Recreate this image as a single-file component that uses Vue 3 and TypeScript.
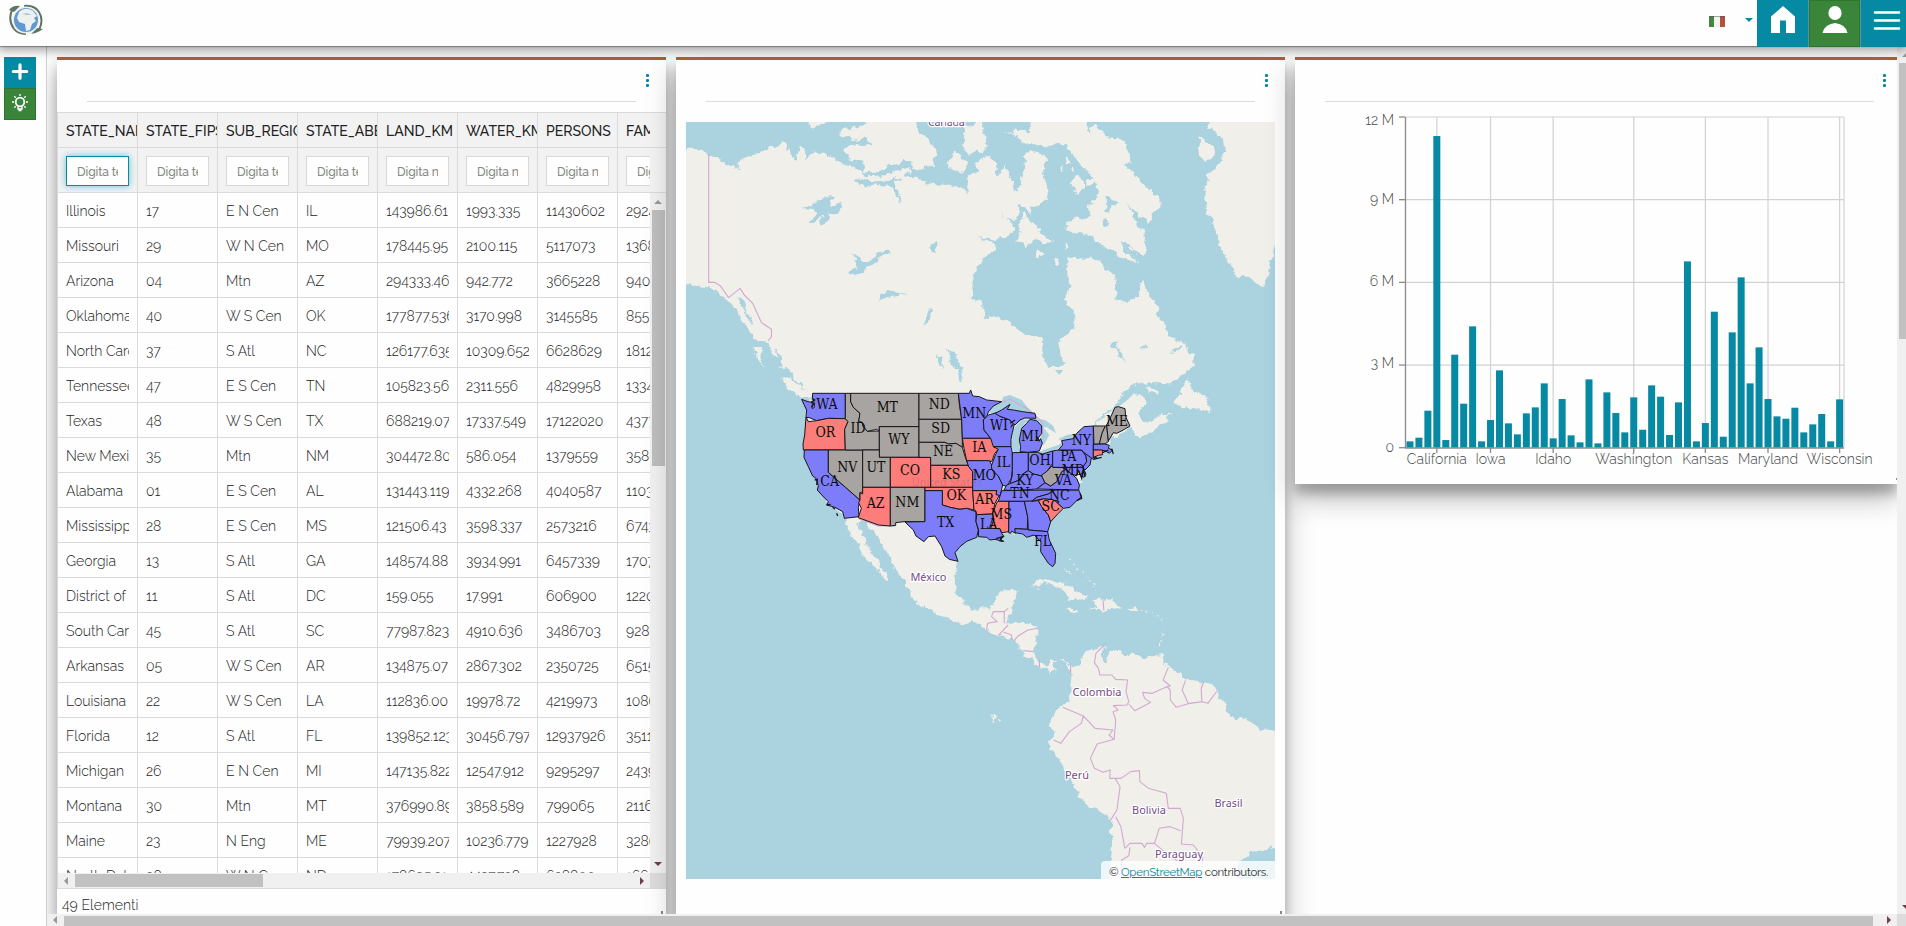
<script setup lang="ts">
type Row = [string, string, string, string, string, string, string, string]

const headers: string[] = ['STATE_NAME', 'STATE_FIPS', 'SUB_REGION', 'STATE_ABBR', 'LAND_KM', 'WATER_KM', 'PERSONS', 'FAMILIES']
const hint = (i: number): string => (i < 4 ? 'Digita testo' : 'Digita numero')

const rows: Row[] = [
  ['Illinois', '17', 'E N Cen', 'IL', '143986.61', '1993.335', '11430602', '2924880'],
  ['Missouri', '29', 'W N Cen', 'MO', '178445.95', '2100.115', '5117073', '1368334'],
  ['Arizona', '04', 'Mtn', 'AZ', '294333.46', '942.772', '3665228', '940106'],
  ['Oklahoma', '40', 'W S Cen', 'OK', '177877.536', '3170.998', '3145585', '855321'],
  ['North Carolina', '37', 'S Atl', 'NC', '126177.635', '10309.652', '6628629', '1812053'],
  ['Tennessee', '47', 'E S Cen', 'TN', '105823.56', '2311.556', '4829958', '1334400'],
  ['Texas', '48', 'W S Cen', 'TX', '688219.07', '17337.549', '17122020', '4377000'],
  ['New Mexico', '35', 'Mtn', 'NM', '304472.80', '586.054', '1379559', '358000'],
  ['Alabama', '01', 'E S Cen', 'AL', '131443.119', '4332.268', '4040587', '1103835'],
  ['Mississippi', '28', 'E S Cen', 'MS', '121506.43', '3598.337', '2573216', '674378'],
  ['Georgia', '13', 'S Atl', 'GA', '148574.88', '3934.991', '6457339', '1707700'],
  ['District of Columbia', '11', 'S Atl', 'DC', '159.055', '17.991', '606900', '122087'],
  ['South Carolina', '45', 'S Atl', 'SC', '77987.823', '4910.636', '3486703', '928206'],
  ['Arkansas', '05', 'W S Cen', 'AR', '134875.07', '2867.302', '2350725', '651555'],
  ['Louisiana', '22', 'W S Cen', 'LA', '112836.00', '19978.72', '4219973', '1086000'],
  ['Florida', '12', 'S Atl', 'FL', '139852.123', '30456.797', '12937926', '3511825'],
  ['Michigan', '26', 'E N Cen', 'MI', '147135.822', '12547.912', '9295297', '2439171'],
  ['Montana', '30', 'Mtn', 'MT', '376990.89', '3858.589', '799065', '211666'],
  ['Maine', '23', 'N Eng', 'ME', '79939.207', '10236.779', '1227928', '328685'],
  ['North Dakota', '38', 'W N Cen', 'ND', '178695.31', '4427.738', '638800', '166270'],
]

/* Chart: persons per state, in thousands */
const persons: number[] = [
  230, 363, 1343, 11309, 278, 3375, 1597, 4403, 230, 1004, 2806, 883, 484, 1246, 1463, 2334, 339, 1766, 448, 194,
  2479, 157, 2008, 1258, 556, 1826, 653, 2262, 1851, 460, 1645, 6761, 230, 895, 4935, 399, 4185, 6181, 2334, 3641,
  1766, 1137, 1052, 1451, 556, 847, 1222, 230, 1754,
]
const plotX = 110.5
const plotTop = 17
const plotBottom = 347.7
const step = 438.6 / 49
const barX = (i: number): number => plotX + step * (i + 0.5) - 3.5
const barH = (v: number): number => (v / 12000) * (plotBottom - plotTop)
const ticksX: { i: number; label: string; w: number }[] = [
  { i: 3, label: 'California', w: 60 },
  { i: 9, label: 'Iowa', w: 30 },
  { i: 16, label: 'Idaho', w: 36 },
  { i: 25, label: 'Washington', w: 77 },
  { i: 33, label: 'Kansas', w: 46 },
  { i: 40, label: 'Maryland', w: 60 },
  { i: 48, label: 'Wisconsin', w: 66 },
]
const ticksY: { v: number; label: string; dy: number }[] = [
  { v: 12, label: '12 M', dy: 8 },
  { v: 9, label: '9 M', dy: 4 },
  { v: 6, label: '6 M', dy: 4 },
  { v: 3, label: '3 M', dy: 3 },
  { v: 0, label: '0', dy: 4 },
]
const yOf = (v: number): number => plotBottom - barH(v * 1000)

/* Map: state outlines grouped by class */
type Tone = 'blue' | 'red' | 'gray'
const states: [Tone, string][] = [
  ['blue', '98,70 196,70 196,146 145,145 110,152 88,143 78,142 80,120 72,104 65,88 84,95 96,97 99,112 94,108 97,116 103,112 102,96 97,84'],
  ['red', '78,142 85,155 110,152 145,145 196,146 204,155 194,178 196,240 70,240 69,222 74,195'],
  ['blue', '73,240 145,240 145,307 240,390 235,412 237,440 193,445 188,425 165,412 140,405 145,395 128,378 112,360 115,348 108,325 98,318 85,290 72,262'],
  ['gray', '145,240 248,240 248,365 240,368 240,390 145,307'],
  ['gray', '196,70 212,70 212,95 220,112 240,130 236,155 246,156 250,170 262,184 298,183 298,240 196,240 194,178 204,155 196,146'],
  ['gray', '212,70 417,70 417,170 298,170 298,183 290,178 262,184 250,170 246,156 236,155 240,130 220,112 212,95'],
  ['gray', '298,170 417,170 417,262 298,262'],
  ['gray', '248,240 298,240 298,262 331,262 331,352 248,352'],
  ['red', '331,262 452,262 452,352 331,352'],
  ['red', '248,352 331,352 331,468 295,465 235,443 244,415 236,398 240,390 240,368 248,372'],
  ['gray', '331,352 435,352 435,455 372,455 347,458 347,466 331,468'],
  ['gray', '417,70 535,70 539,110 545,148 417,148'],
  ['gray', '417,148 545,148 547,205 547,232 528,220 505,222 495,217 417,217'],
  ['gray', '417,217 495,217 505,222 528,220 547,232 556,262 565,286 452,286 452,262 417,262'],
  ['red', '452,286 565,286 578,305 578,352 452,352'],
  ['red', '435,352 578,352 582,420 560,415 540,418 510,412 487,405 487,362 435,362'],
  ['blue', '435,362 487,362 487,405 510,412 540,418 560,415 588,425 588,455 595,480 590,502 560,514 540,530 525,548 534,574 508,568 495,558 485,530 465,498 445,500 432,515 408,498 400,480 375,456 435,455'],
  ['blue', '535,70 568,70 572,60 578,78 598,80 620,90 665,95 640,108 625,125 622,135 610,150 612,180 632,205 547,205 545,148'],
  ['red', '547,205 638,205 642,222 655,238 644,250 636,274 560,272 552,235'],
  ['blue', '560,272 628,272 638,290 636,300 655,318 668,345 664,362 660,378 648,378 650,362 578,362 578,305 566,290'],
  ['red', '578,362 650,362 648,374 658,376 645,400 638,432 590,434 588,423 582,420'],
  ['blue', '590,434 638,432 642,450 632,475 660,476 665,490 672,500 660,504 668,514 645,508 630,510 620,502 595,500 596,480 588,455'],
  ['blue', '625,135 650,128 658,138 690,150 698,160 693,172 705,155 697,188 693,208 693,230 640,230 632,205 612,180 610,150'],
  ['blue', '640,230 693,230 697,248 697,300 694,325 680,350 668,345 655,318 636,300 634,288 646,255 655,238'],
  ['blue', '697,248 745,247 745,302 728,312 718,330 690,342 697,315'],
  ['blue', '720,245 722,230 718,210 725,175 740,160 750,148 770,152 785,168 785,190 772,208 777,214 782,206 787,220 778,243 745,247'],
  ['blue', '645,130 665,120 690,103 682,118 700,120 728,125 765,130 768,145 735,144 720,150 705,165 698,160 690,150 658,138'],
  ['blue', '745,247 772,247 788,252 818,243 818,280 800,305 785,318 760,312 745,302'],
  ['blue', '672,360 680,345 718,330 728,312 745,302 760,312 785,318 795,338 770,357 705,362'],
  ['blue', '665,362 825,360 805,372 770,382 755,394 655,394'],
  ['red', '652,394 687,394 686,485 665,488 660,476 632,475 642,450 638,430'],
  ['blue', '687,394 733,394 743,440 742,478 705,476 708,490 695,484 692,490 686,488'],
  ['blue', '733,394 775,392 785,410 805,435 812,455 803,485 745,480 743,440'],
  ['blue', '705,476 742,478 745,480 803,485 808,510 827,550 825,580 818,590 805,580 782,545 783,515 762,495 740,502 728,492 705,488'],
  ['red', '775,392 790,386 815,388 825,392 850,415 835,430 812,455 805,435 785,410'],
  ['blue', '755,394 770,382 805,372 825,360 896,360 905,380 890,392 870,412 850,415 825,392 815,388 790,386'],
  ['blue', '770,357 795,338 812,348 830,335 845,305 858,298 875,312 890,325 898,345 896,360'],
  ['gray', '787,322 785,315 802,303 818,285 820,292 848,293 858,298 845,305 830,335 812,348 795,338'],
  ['blue', '818,243 835,240 905,240 918,258 920,275 910,292 818,292'],
  ['blue', '848,293 908,292 918,312 912,322 900,315 895,300 890,318 875,312 858,298'],
  ['blue', '905,240 912,248 935,258 930,285 915,300 908,292 920,275 918,258'],
  ['blue', '835,240 848,225 845,212 880,206 890,190 912,170 940,168 940,262 950,262 940,268 912,248 905,240'],
  ['gray', '940,168 976,168 966,190 958,222 942,223'],
  ['gray', '976,168 980,165 985,215 975,222 958,222 966,190'],
  ['gray', '980,165 995,135 1005,112 1015,110 1035,116 1037,140 1050,168 1030,180 1010,190 1000,188 985,213'],
  ['blue', '940,223 975,222 988,226 985,235 998,240 988,250 975,242 940,240'],
  ['red', '940,240 968,240 968,254 955,256 940,262'],
]
const labels: [string, number, number][] = [
  ['WA', 141, 103], ['OR', 136, 187], ['ID', 234, 174], ['MT', 322, 110], ['ND', 478, 101], ['SD', 482, 174],
  ['MN', 583, 128], ['WI', 657, 166], ['WY', 357, 208], ['NE', 489, 243], ['IA', 598, 231], ['MI', 750, 197],
  ['NY', 904, 209], ['ME', 1011, 152], ['NV', 202, 292], ['UT', 288, 292], ['CO', 390, 300], ['KS', 514, 312],
  ['MO', 613, 314], ['IL', 670, 275], ['OH', 780, 271], ['PA', 865, 258], ['MD', 880, 299], ['KY', 735, 331],
  ['VA', 850, 331], ['TN', 720, 368], ['NC', 838, 375], ['SC', 812, 409], ['AR', 614, 386], ['OK', 529, 374],
  ['CA', 149, 334], ['AZ', 287, 399], ['NM', 382, 397], ['TX', 497, 456], ['LA', 626, 463], ['MS', 664, 432],
  ['FL', 788, 513],
]
const countries: [string, number, number, number][] = [
  ['México', 242.5, 458.5, 36],
  ['Colombia', 411, 573.5, 49],
  ['Perú', 391, 657, 24],
  ['Bolivia', 463, 692, 34],
  ['Brasil', 542.5, 685, 28],
  ['Paraguay', 493, 736, 48],
]
</script>

<template>
  <div class="page">
    <header class="topbar">
      <svg class="logo" viewBox="0 0 36 32" width="36" height="32">
        <path d="M5 4 Q-1 15 6 25 Q10 30 18 30" fill="none" stroke="#5f7563" stroke-width="2" />
        <path d="M16 2 Q27 1 31 8 Q36 16 31 26" fill="none" stroke="#5f7563" stroke-width="2" />
        <path d="M1 6 Q5 1 12 2 L6 8Z M35 25 Q30 29 23 30 L29 24Z" fill="#5f7563" />
        <circle cx="18" cy="16" r="13.5" fill="#eceeee" />
        <circle cx="18" cy="16" r="12" fill="#5f98d3" />
        <path d="M11 8 Q17 2 25 7 L29 12 L26 14 L28 17 L24 20 L22 26 L18 27 L17 20 L11 18 L9 14Z" fill="#eef0ee" />
        <path d="M14 10 L19 9 L24 11 L19 11Z" fill="#a8c5df" />
      </svg>
      <div class="topright">
        <svg class="flag" width="16" height="11" viewBox="0 0 16 11">
          <path d="M0 0h5v11h-5z" fill="#3f8a3c" /><path d="M5 0h6v11h-6z" fill="#f2f2f0" /><path d="M11 0h5v11h-5z" fill="#b8503c" />
          <path d="M1.500 10V1.500H5M11 1.500H14.500V6" fill="none" stroke="#666" opacity=".6" /><path d="M0 .5H16" stroke="#555" opacity=".5" />
        </svg>
        <span class="caret"></span>
        <button class="sq teal">
          <svg width="52" height="47" viewBox="0 0 52 47"><path d="M26 6 L38 16.500 V33 H29 V20.500 H23 V33 H14 V16.500Z" fill="#fff" /></svg>
        </button>
        <button class="sq green">
          <svg width="52" height="47" viewBox="0 0 52 47"><ellipse cx="26" cy="13" rx="6.600" ry="7" fill="#fff" /><path d="M13.500 33 Q15 24.500 26 23 Q37 24.500 38.500 33Z" fill="#fff" /></svg>
        </button>
        <button class="sq teal last">
          <svg width="45" height="47" viewBox="0 0 45 47"><path d="M14 12.500H38M14 20.500H38M14 28.500H38" stroke="#fff" stroke-width="2.600" stroke-linecap="round" /></svg>
        </button>
      </div>
    </header>

    <div class="main">
      <aside class="side">
        <button class="tool teal">
          <svg width="32" height="31" viewBox="0 0 32 31"><path d="M9.300 14.500H22.700M16 7.800V21.200" stroke="#fff" stroke-width="3.200" stroke-linecap="round" /></svg>
        </button>
        <button class="tool green">
          <svg width="32" height="32" viewBox="0 0 32 32" fill="none" stroke="#fff">
            <circle cx="16" cy="14" r="4.300" stroke-width="1.800" />
            <path d="M14 18.500V21H18V18.500M14.500 22.500H17.500" stroke-width="1.400" />
            <path d="M16 6V8M10.300 8.300L11.700 9.700M21.700 8.300L20.300 9.700M8 14H10M22 14H24M10.300 19.700L11.700 18.300M21.700 19.700L20.300 18.300" stroke-width="1.300" />
          </svg>
        </button>
      </aside>

      <div class="workspace">
        <div class="cards">
          <section class="card tall">
            <div class="head"><i class="dots"></i></div>
            <div class="grid">
              <div class="line heads">
                <div v-for="h in headers" :key="h" class="hcell">{{ h }}</div>
              </div>
              <div class="line filters">
                <div v-for="(h, i) in headers" :key="h" class="fcell">
                  <div class="field" :class="{ focus: i === 0 }"><span>{{ hint(i) }}</span></div>
                </div>
              </div>
              <div class="bodywrap">
                <div class="body">
                  <div v-for="r in rows" :key="r[0]" class="line row">
                    <div v-for="(c, i) in r" :key="i" class="cell" :class="{ num: i > 3 || i === 1 }"><span>{{ c }}</span></div>
                  </div>
                </div>
                <div class="vbar"><i class="up"></i><b></b><i class="down"></i></div>
              </div>
              <div class="hbar"><i class="left"></i><b></b><i class="right"></i></div>
            </div>
            <div class="foot">49 Elementi</div>
            <span class="grip"></span>
          </section>

          <section class="card tall">
            <div class="head"><i class="dots"></i></div>
            <div class="map">
              <svg width="589" height="757" viewBox="0 0 589 757">
                <defs>
                  <filter id="coast" x="-10" y="-10" width="609" height="777" filterUnits="userSpaceOnUse">
                    <feTurbulence type="fractalNoise" baseFrequency=".16" numOctaves="3" seed="4" />
                    <feDisplacementMap in="SourceGraphic" scale="7" xChannelSelector="R" yChannelSelector="G" />
                  </filter>
                </defs>
                <rect width="589" height="757" fill="#aad2df" />
                <g filter="url(#coast)">
                  <rect x="-10" y="-10" width="609" height="777" fill="#aad2df" />
                  <g transform="matrix(.38265 0 0 .33333 -6 -12)" class="land">
                    <path d="M-20,120 L16,120 L40,113 L58,120 L75,134 L95,138 L110,150 L125,165 L145,172 L160,181 L150,160 L165,145 L185,135 L195,128 L215,125 L240,105 L252,112 L262,100 L268,88 L280,105 L285,125 L300,148 L306,148 L312,110 L325,115 L330,148 L345,128 L380,128 L395,142 L410,150 L420,162 L450,170 L475,182 L485,200 L520,202 L560,185 L600,172 L605,185 L585,195 L590,205 L560,205 L530,215 L500,212 L460,205 L455,217 L485,228 L520,222 L545,228 L560,235 L565,260 L577,285 L570,240 L560,215 L590,202 L620,200 L640,220 L700,225 L725,230 L742,240 L755,246 L750,205 L760,190 L780,185 L775,155 L800,140 L825,155 L830,200 L850,165 L858,198 L870,210 L878,248 L890,220 L898,190 L903,125 L920,122 L940,130 L960,150 L945,190 L953,215 L963,240 L960,258 L945,275 L935,290 L915,290 L920,320 L905,295 L888,280 L890,300 L875,330 L850,325 L835,305 L845,320 L870,340 L870,360 L855,380 L840,382 L825,392 L780,380 L820,402 L825,420 L800,435 L780,465 L770,490 L764,520 L764,568 L787,570 L797,624 L825,617 L860,635 L878,655 L905,675 L948,683 L950,735 L955,760 L965,775 L985,793 L1000,785 L1003,760 L995,735 L988,695 L1020,670 L1030,655 L1032,610 L1025,595 L1003,570 L1018,530 L1012,480 L1012,440 L1035,440 L1050,450 L1075,440 L1095,455 L1110,480 L1135,490 L1140,520 L1138,565 L1168,582 L1180,568 L1197,560 L1200,530 L1210,508 L1225,555 L1250,590 L1248,610 L1262,640 L1285,685 L1320,700 L1325,720 L1342,735 L1342,770 L1320,790 L1280,820 L1190,820 L1160,850 L1130,900 L340,900 L345,850 L315,820 L295,790 L275,775 L265,745 L240,730 L235,700 L205,695 L185,665 L165,640 L155,600 L135,580 L120,570 L95,540 L75,532 L16,522 L-20,522Z" />
                    <path d="M413,70 L440,55 L480,45 L485,20 L620,20 L622,65 L650,90 L665,110 L672,130 L660,150 L665,172 L640,165 L635,180 L610,178 L600,150 L585,150 L575,165 L545,165 L530,180 L500,190 L480,185 L480,155 L440,145 L428,118 L445,105 L505,102 L490,88 L455,92Z M332,20 L345,62 L358,45 L378,40 L380,20Z M742,50 L770,48 L780,20 L790,50 L803,100 L795,130 L770,125 L755,135 L738,110Z M708,135 L720,122 L735,145 L752,155 L742,190 L720,180 L700,178Z M842,65 L870,70 L872,55 L915,68 L912,20 L1060,20 L1070,65 L1080,40 L1095,60 L1120,80 L1150,85 L1165,110 L1180,155 L1160,165 L1190,200 L1220,230 L1258,270 L1250,300 L1235,310 L1225,345 L1210,325 L1190,308 L1175,290 L1190,330 L1215,370 L1210,395 L1218,415 L1215,440 L1200,435 L1165,400 L1155,398 L1200,460 L1165,448 L1120,415 L1095,405 L1085,385 L1050,368 L1010,365 L1012,335 L1030,325 L1050,330 L1075,320 L1065,295 L1095,250 L1090,225 L1070,190 L1040,155 L1010,105 L990,98 L960,110 L935,100 L895,100 L880,75Z M900,305 L915,335 L940,355 L940,370 L978,395 L950,400 L930,385 L905,415 L900,395 L875,398 L892,370 L888,335Z M927,440 L935,420 L955,432 L937,448Z M978,445 L990,445 L985,472Z M1005,400 L1018,405 L1008,418Z M1345,20 L1385,40 L1380,50 L1420,90 L1422,130 L1410,160 L1395,180 L1375,195 L1385,210 L1370,240 L1378,310 L1395,330 L1400,370 L1410,385 L1405,405 L1430,450 L1455,500 L1490,500 L1510,522 L1525,530 L1535,500 L1545,450 L1555,410 L1580,400 L1580,20Z M1360,80 L1385,105 L1400,120 L1395,145 L1370,153 L1355,130Z M265,802 L290,805 L320,835 L347,862 L320,865 L285,840Z M192,710 L212,715 L210,745 L222,772 L200,745Z M145,590 L160,590 L180,640 L165,645Z M180,655 L205,660 L195,690Z" />
                    <ellipse cx="1040" cy="223" rx="16" ry="25" />
                    <ellipse cx="1072" cy="215" rx="12" ry="9" /><ellipse cx="1012" cy="150" rx="5" ry="10" /><ellipse cx="1000" cy="175" rx="4" ry="8" /><ellipse cx="1027" cy="180" rx="4" ry="7" />
                  </g>
                  <g transform="matrix(.33333 0 0 .33333 94 248)" class="land">
                    <path d="M-10,-10 L30,0 L50,30 L75,60 L100,88 L80,96 L82,240 L108,320 L148,396 L193,442 L205,480 L235,520 L240,540 L260,570 L295,600 L320,632 L325,620 L300,588 L290,560 L268,545 L255,500 L240,480 L235,455 L260,450 L270,475 L295,500 L310,535 L330,560 L350,600 L385,650 L400,680 L500,680 L525,640 L523,600 L530,570 L520,550 L540,520 L590,490 L700,490 L755,490 L780,510 L815,575 L820,550 L800,490 L806,460 L846,415 L893,393 L893,350 L918,290 L933,265 L985,243 L985,215 L1045,175 L1050,170 L1065,200 L1080,205 L1130,175 L1170,150 L1160,140 L1175,130 L1140,135 L1105,158 L1085,150 L1075,125 L1095,100 L1095,80 L1060,70 L1035,88 L1010,110 L985,128 L940,165 L935,163 L980,125 L1010,90 L1030,60 L1055,40 L1140,36 L1140,-10Z" />
                    <path d="M1225,20 L1235,45 L1240,62 L1275,75 L1292,115 L1286,130 L1262,115 L1240,118 L1180,102 L1200,70Z M1092,48 L1110,50 L1140,65 L1135,72 L1110,66Z" />
                  </g>
                  <g transform="matrix(.39541 0 0 .33333 -6 438)" class="land">
                    <path d="M528,0 L545,18 L560,30 L583,70 L583,110 L600,130 L640,155 L680,180 L712,193 L745,183 L765,200 L785,220 L805,228 L840,238 L855,258 L870,275 L868,290 L885,292 L905,322 L930,325 L940,340 L948,325 L940,312 L960,300 L975,310 L990,340 L990,400 L985,420 L965,440 L950,455 L940,480 L938,505 L950,515 L932,540 L938,570 L950,580 L962,605 L985,655 L1005,690 L1005,710 L1035,740 L1060,750 L1090,782 L1090,820 L1093,850 L1085,980 L1405,980 L1410,910 L1440,880 L1490,865 L1530,850 L1530,515 L1480,508 L1462,518 L1458,492 L1420,475 L1400,475 L1382,455 L1380,430 L1365,410 L1360,390 L1345,372 L1325,365 L1280,362 L1260,335 L1240,322 L1225,310 L1225,290 L1190,288 L1170,295 L1150,285 L1120,285 L1115,270 L1090,270 L1078,285 L1080,305 L1070,308 L1065,290 L1072,270 L1075,252 L1045,272 L1025,275 L1015,290 L1015,315 L995,325 L970,300 L935,305 L930,320 L908,300 L895,280 L900,240 L905,205 L870,188 L825,192 L832,170 L840,145 L852,95 L832,87 L805,97 L795,140 L740,150 L718,130 L700,100 L693,60 L705,0Z M885,80 L905,62 L930,58 L960,65 L985,78 L1005,95 L1032,112 L1005,117 L985,117 L975,95 L940,72 L920,70Z M1045,125 L1060,118 L1085,120 L1118,142 L1085,148 L1073,158 L1058,148 L1030,147 L1058,140Z M975,145 L1000,148 L1002,154 L985,155Z M1135,145 L1156,145 L1156,153 L1135,152Z M785,462 L800,468 L795,485 L790,478Z M805,478h6v6h-6z M975,20 L985,42 L977,38Z M903,82 L912,84 L907,90Z M1213,280 L1224,280 L1224,290 L1213,290Z" />
                    <path class="dashes" d="M985,0 L1000,20 L1020,35 L1035,60 L1050,80 L1060,95 M1165,150 L1190,155 L1212,165 L1220,190 L1225,215 L1215,250 L1205,265" />
                  </g>
                  <g class="water" transform="matrix(.38265 0 0 .33333 -6 -12)">
                    <path d="M310,292 L345,285 L385,258 L402,262 L392,285 L398,288 L422,275 L418,308 L390,312 L385,335 L368,348 L362,340 L368,325 L382,318 L375,315 L350,340 L335,338 L355,312 L345,297Z M445,430 L485,455 L500,450 L520,425 L550,425 L548,432 L530,432 L515,455 L485,475 L480,492 L438,496 L445,480 L465,478 L462,450Z M518,572 L525,555 L545,540 L570,548 L598,552 L555,557Z M655,590 L662,600 L652,630 L636,648 L645,610Z M700,720 L718,722 L728,755 L738,785 L738,818 L730,810 L725,775 L708,765Z M668,740 L685,742 L688,780 L680,762Z M655,405 L676,400 L668,418 L672,432 L654,418Z M1112,258 L1145,275 L1140,288 L1128,290 L1115,310Z M1105,325 L1122,348 L1105,352Z M1125,695 L1148,695 L1140,710 L1155,730 L1163,755 L1140,720 L1125,712Z M1198,718 L1215,700 L1226,718 L1212,714Z M1275,732 L1315,705 L1300,725Z M1166,278 L1200,320 L1185,310Z M1148,390 L1175,425 L1198,460 L1160,425Z M150,560 L165,575 L175,610 L190,640 L185,645 L168,605Z M245,715 L262,735 L268,760 L258,745Z" />
                  </g>
                </g>
                <g class="water" transform="matrix(.33333 0 0 .33333 94 248)">
                  <path d="M620,128 L640,108 L665,95 L670,80 L690,75 L725,90 L745,115 L770,138 L765,145 L745,130 L700,122 L682,118 L650,130Z M720,150 L700,180 L693,230 L705,250 L718,243 L722,200 L735,160 L752,148Z M750,148 L765,145 L795,150 L820,168 L828,190 L800,172 L790,172 L808,195 L795,220 L788,225 L778,218 L785,190 L775,165Z M772,250 L790,240 L835,225 L845,218 L845,230 L800,252 L780,256Z M835,207 L860,195 L890,190 L884,207 L845,212Z M1060,70 L1045,88 L990,130 L1000,118 L1030,80Z M535,0 L542,0 L545,25 L540,38Z M825,0 L850,0 L838,14Z" />
                </g>

                <g class="borders">
                  <g transform="matrix(.38265 0 0 .33333 -6 -12)">
                    <path d="M75,132 V517 L90,517 L105,527 L127,563 L157,535 L168,555 L190,580 L213,638 L239,658 L239,680 L230,693" />
                  </g>
                  <g transform="matrix(.39541 0 0 .33333 -6 438)">
                    <path d="M792,155 H820 V190 M830,145 L820,155 M792,155 L788,170 L802,185 L778,190 L775,212 M830,195 L805,226 M818,216 L838,225 L840,238 M845,242 L855,228 L880,210 L905,205 M868,272 L895,275 M909,300 V322 M988,318 V340 M1070,122 L1072,152 M1075,252 L1052,280 L1048,308 L1058,325 L1062,345 L1092,345 L1102,358 L1132,360 L1128,395 L1135,425 L1130,435 L1096,437 L1108,450 L1095,455 L1102,480 L1098,538 L1085,525 L1095,510 L1050,505 L1020,468 L968,442 M1020,468 L1015,490 L985,515 L963,550 L945,540 M1135,432 L1150,452 L1170,440 L1190,427 L1175,415 L1170,397 L1195,400 L1228,382 L1240,378 L1222,360 L1235,322 M1230,378 L1240,390 L1240,420 L1255,442 L1290,430 L1320,425 L1318,385 L1325,365 M1278,362 L1270,390 L1285,430 M1320,425 L1335,430 L1358,393 M1098,538 L1055,552 L1038,595 L1048,625 L1070,637 L1088,630 L1087,655 L1115,655 L1140,635 L1162,632 L1163,665 L1185,685 L1230,700 L1235,745 L1265,745 L1273,775 L1268,852 L1298,855 L1322,890 L1320,925 M1100,655 L1113,680 L1105,750 L1088,782 M1102,770 L1115,800 L1125,865 L1138,850 L1168,850 L1175,862 L1180,850 L1200,850 L1212,805 L1240,800 L1266,812 M1200,850 L1245,895 L1272,910 M1138,862 L1135,887 L1117,900 L1116,940" />
                  </g>
                  <g transform="matrix(.33333 0 0 .33333 94 248)">
                    <path d="M665,95 L690,88 L745,118 L770,140 L785,155 L790,200 M237,447 L295,468 L347,468" />
                  </g>
                </g>

                <g class="halo">
                  <text x="242" y="4" textLength="37">Canada</text>
                  <text v-for="c in countries" :key="c[0]" :x="c[1]" :y="c[2]" :textLength="c[3]" text-anchor="middle">{{ c[0] }}</text>
                </g>

                <g transform="matrix(.33333 0 0 .33333 94 248)">
                  <polygon v-for="(s, i) in states" :key="i" :points="s[1]" class="state" :class="s[0]" />
                  <path class="rough" d="M96,85 L104,90 L95,95 L103,102 L96,108 M104,330 L112,328 L110,345 M140,405 L152,403 M158,412 L165,418 M170,430 L173,438 M968,248 L985,240 M995,236 L1000,252 M940,268 L965,262 M895,300 L905,325 L910,300 L916,320 M890,392 L905,385 L900,370 M648,506 L668,500 L660,512 L672,514 M690,160 L705,150 M770,200 L778,212" />
                </g>
                <text class="us" x="226" y="364" textLength="70">United States</text>
                <g class="abbr">
                  <text v-for="l in labels" :key="l[0]" :x="l[1] / 3 + 94" :y="l[2] / 3 + 253" text-anchor="middle">{{ l[0] }}</text>
                </g>
              </svg>
              <div class="attrib">© <a>OpenStreetMap</a> contributors.</div>
            </div>
            <span class="grip"></span>
          </section>

          <section class="card short">
            <div class="head"><i class="dots"></i></div>
            <svg class="chart" width="602" height="384" viewBox="0 0 602 384">
              <g class="gridlines">
                <path v-for="t in ticksY.slice(0, 4)" :key="t.v" :d="`M${plotX} ${yOf(t.v)}H549`" />
                <path v-for="t in ticksX" :key="t.i" :d="`M${barX(t.i) + 3.5} 17V347.500`" />
                <path d="M549 17V347.500" />
              </g>
              <rect v-for="(v, i) in persons" :key="i" :x="barX(i)" :y="plotBottom - barH(v)" width="7" :height="barH(v)" fill="#0689a2" />
              <g class="axis">
                <path d="M110.500 17V348H549" />
                <path v-for="t in ticksY" :key="t.v" :d="`M104 ${yOf(t.v)}H110`" />
                <path v-for="t in ticksX" :key="t.i" :d="`M${barX(t.i) + 3.5} 348V353`" />
              </g>
              <g class="ticktext">
                <text v-for="t in ticksY" :key="t.v" x="99" :y="yOf(t.v) + t.dy" text-anchor="end">{{ t.label }}</text>
                <text v-for="t in ticksX" :key="t.i" :x="barX(t.i) + 3.5" y="364" text-anchor="middle" :textLength="t.w">{{ t.label }}</text>
              </g>
            </svg>
            <span class="grip"></span>
          </section>
        </div>
        <div class="hscroll"><i class="left"></i><b></b><i class="right"></i></div>
      </div>
      <div class="vscroll"><i class="up"></i><b></b><i class="down"></i><em></em></div>
    </div>
  </div>
</template>

<style>
body { overflow: hidden; background: #fefefe; }
</style>

<style scoped>
* { box-sizing: border-box; }
.page { width: 1906px; height: 926px; overflow: hidden; background: #fefefe; font-family: Raleway, Lato, "Open Sans", sans-serif; color: #222; display: flex; flex-direction: column; }
button { border: 0; padding: 0; display: block; }
button svg { display: block; }
.teal { background: #0689a2; }
.green { background: #3a853a; box-shadow: inset 0 0 0 1px #2f7530; }

.topbar { height: 46px; flex: none; background: #fefefe; display: flex; justify-content: space-between; position: relative; z-index: 5; box-shadow: 0 1px 1px rgba(0, 0, 0, .3), 0 3px 9px 2px rgba(0, 0, 0, .33); }
.logo { margin: 4px 0 0 8px; }
.topright { display: flex; align-items: flex-start; height: 47px; }
.flag { margin: 16px 20px 0 0; }
.caret { border: 4px solid transparent; border-top-color: #0689a2; border-bottom: 0; margin: 18px 4px 0 0; }
.sq { width: 52px; height: 47px; border-right: 1px solid #5792a6; overflow: hidden; }
.sq.last { width: 45px; border: 0; }

.main { flex: 1; display: flex; min-height: 0; }
.side { width: 46px; flex: none; padding: 11px 0 0 4px; background: #fefefe; position: relative; }
.tool { width: 32px; height: 31px; }
.tool + .tool { height: 32px; }
.workspace { width: 1851px; flex: none; display: flex; flex-direction: column; overflow: hidden; border-left: 1px solid #cfcfcf; }
.cards { flex: 1; min-height: 0; display: flex; gap: 10px; align-items: flex-start; padding: 11px 0 0 10px; overflow: hidden; }
.card { width: 609px; flex: none; background: #fefefe; border-top: 3px solid #a95f3b; box-shadow: 0 14px 28px rgba(0, 0, 0, .27), 0 10px 10px rgba(0, 0, 0, .22); position: relative; }
.tall { height: 870px; }
.short { height: 427px; width: 602px; }
.head { height: 42px; margin: 0 30px; border-bottom: 1px solid #dcdcdc; position: relative; }
.short .head { margin-right: 23px; }
.dots { position: absolute; right: -13px; top: 14px; width: 3px; height: 3px; border-radius: 1px; background: #0689a2; box-shadow: 0 5px #0689a2, 0 10px #0689a2; }
.short .dots { right: -12px; }
.grip { position: absolute; right: 3px; top: 851px; width: 2px; height: 3px; background: #888; }
.short .grip { right: 0; top: 418px; width: 1px; height: 2px; }

.grid { margin-top: 10px; border-top: 1px solid #dadada; border-left: 1px solid #dadada; border-bottom: 1px solid #dadada; height: 777px; overflow: hidden; }
.line { display: flex; width: 592px; overflow: hidden; }
.heads, .filters { background: #f2f2f2; }
.heads { width: 608px; height: 35px; border-bottom: 1px solid #dadada; }
.filters { height: 45px; width: 608px; border-bottom: 1px solid #dadada; }
.hcell, .fcell, .cell { width: 80px; flex: none; border-right: 1px solid #dadada; padding-left: 8px; overflow: hidden; white-space: nowrap; }
.hcell:last-child, .fcell:last-child { width: 32px; border-right: 0; }
.hcell { font-size: 14px; line-height: 37px; font-weight: 500; }
.fcell { padding-top: 8px; }
.fcell:last-child .field { border-right: 0; width: 24px; }
.field { width: 63px; height: 30px; border: 1px solid #d8d8d8; background: #fefefe; padding: 0 10px; font-size: 12px; line-height: 30px; color: #858985; font-weight: 500; letter-spacing: -.1px; overflow: hidden; }
.field span { display: block; width: 41px; overflow: hidden; }
.field.focus { border-color: #0689a2; box-shadow: 0 0 7px rgba(6, 160, 190, .6); }
.bodywrap { height: 680px; display: flex; }
.body { width: 592px; overflow: hidden; height: 680px; }
.row { height: 35px; border-bottom: 1px solid #dadada; }
.cell { font-size: 14px; line-height: 36px; font-weight: 300; padding-right: 8px; }
.cell span { display: block; overflow: hidden; }
.vbar, .vscroll { background: #f0f0f0; display: flex; flex-direction: column; align-items: center; position: relative; }
.vbar { width: 16px; height: 680px; }
.vbar b { width: 13px; height: 256px; background: #bdbdbd; margin-top: 6px; }
i.up { border: 4px solid transparent; border-bottom-color: #999; border-top: 0; margin-top: 7px; }
i.down { border: 4px solid transparent; border-top-color: #6b4149; border-bottom: 0; margin-top: auto; margin-bottom: 7px; }
i.left { border: 4px solid transparent; border-right-color: #999; border-left: 0; }
i.right { border: 4px solid transparent; border-left-color: #6b4149; border-right: 0; margin-left: auto; }
.hbar { height: 15px; background: linear-gradient(90deg, #f0f0f0 592px, #dcdcdc 592px); display: flex; align-items: center; padding: 0 22px 0 6px; }
.hbar b { width: 188px; height: 13px; background: #c1c1c1; margin-left: 7px; }
.foot { font-size: 14px; line-height: 32px; padding-left: 5px; font-weight: 300; letter-spacing: .05px; }

.map { margin: 20px 10px 0; width: 589px; height: 757px; position: relative; overflow: hidden; }
.map svg { display: block; }
.land path, .land ellipse { fill: #f0efea; }
.land .dashes { fill: none; stroke: #f0efea; stroke-width: 4; stroke-dasharray: 4 12; }
.water path { fill: #aad2df; }
.borders path { fill: none; stroke: #d2a9cf; stroke-width: 1.100px; vector-effect: non-scaling-stroke; stroke-linejoin: round; }
.state { stroke: #17171c; stroke-width: 1px; vector-effect: non-scaling-stroke; }
.state.blue { fill: #7d7dfa; }
.state.red { fill: #fc7d7a; }
.state.gray { fill: #a8a4a1; }
.rough { fill: none; stroke: #17171c; stroke-width: 1.300px; vector-effect: non-scaling-stroke; }
.abbr text { font-family: "DejaVu Serif Condensed", "DejaVu Serif", serif; font-size: 14px; font-stretch: condensed; fill: #0c0c0c; }
.halo text { font-family: "Noto Sans", sans-serif; font-size: 11px; fill: #754a86; stroke: #fff; stroke-width: 2.500px; paint-order: stroke; stroke-linejoin: round; }
.us { font-family: "Noto Sans", sans-serif; font-size: 10.500px; fill: #8c5a6e; opacity: .32; }
.attrib { position: absolute; right: 0; bottom: 0; width: 174px; height: 18px; background: rgba(255, 255, 255, .8); border-radius: 4px 0 0; font-size: 11.500px; line-height: 23px; padding-left: 8px; white-space: nowrap; color: #333; letter-spacing: -.25px; overflow: hidden; }
.attrib a { color: #0689a2; text-decoration: underline; }

.chart { display: block; margin-top: -2px; }
.gridlines path { stroke: #d2d2d2; stroke-width: 1.200px; }
.axis path { stroke: #8a8a8a; stroke-width: 1.300px; fill: none; }
.ticktext text { font-size: 14px; font-weight: 300; fill: #444; }

.hscroll { height: 12px; flex: none; background: #f0f0f0; display: flex; align-items: center; padding: 0 6px 0 6px; }
.hscroll b { width: 1809px; height: 10px; margin: 2px 0 0 7px; background: #c1c1c1; }
.vscroll { width: 9px; flex: none; align-items: flex-start; padding-left: 2px; overflow: hidden; }
.vscroll .up { margin: 7px 0 0 3px; }
.vscroll b { width: 8px; height: 276px; margin-top: 6px; background: #c1c1c1; }
.vscroll .down { margin: auto 0 5px 3px; }
.vscroll em { width: 9px; height: 12px; flex: none; margin-left: -2px; background: #dcdcdc; }
</style>
